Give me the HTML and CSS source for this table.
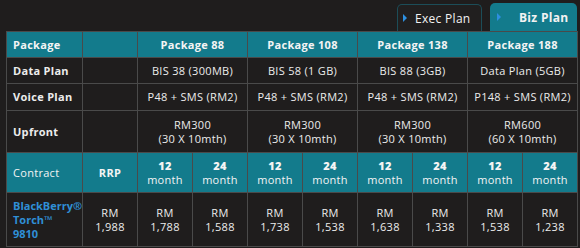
FILE: index.html
```html
<!DOCTYPE html>
<html>
<head>
<meta charset="utf-8">
<link rel="stylesheet" href="styles.css">
</head>
<body>
<div class="page">
  <div class="tabs">
    <div class="tab tab-exec"><span class="arrow"></span>Exec Plan</div>
    <div class="tab tab-biz"><span class="arrow"></span>Biz Plan</div>
  </div>
  <table class="plans">
    <colgroup>
      <col class="c-label"><col class="c-cell"><col class="c-cell"><col class="c-cell"><col class="c-cell"><col class="c-cell"><col class="c-cell"><col class="c-cell"><col class="c-cell"><col class="c-cell">
    </colgroup>
    <tr class="head r-head">
      <th class="label">Package</th>
      <th></th>
      <th colspan="2">Package 88</th>
      <th colspan="2">Package 108</th>
      <th colspan="2">Package 138</th>
      <th colspan="2">Package 188</th>
    </tr>
    <tr class="r-data">
      <th class="label">Data Plan</th>
      <td></td>
      <td colspan="2">BIS 38 (300MB)</td>
      <td colspan="2">BIS 58 (1 GB)</td>
      <td colspan="2">BIS 88 (3GB)</td>
      <td colspan="2">Data Plan (5GB)</td>
    </tr>
    <tr class="r-voice">
      <th class="label">Voice Plan</th>
      <td></td>
      <td colspan="2">P48 + SMS (RM2)</td>
      <td colspan="2">P48 + SMS (RM2)</td>
      <td colspan="2">P48 + SMS (RM2)</td>
      <td colspan="2">P148 + SMS (RM2)</td>
    </tr>
    <tr class="r-upfront">
      <th class="label">Upfront</th>
      <td></td>
      <td colspan="2">RM300<br>(30 X 10mth)</td>
      <td colspan="2">RM300<br>(30 X 10mth)</td>
      <td colspan="2">RM300<br>(30 X 10mth)</td>
      <td colspan="2">RM600<br>(60 X 10mth)</td>
    </tr>
    <tr class="head r-contract">
      <th class="label plain">Contract</th>
      <th>RRP</th>
      <th><b>12</b><br><span class="m">month</span></th>
      <th><b>24</b><br><span class="m">month</span></th>
      <th><b>12</b><br><span class="m">month</span></th>
      <th><b>24</b><br><span class="m">month</span></th>
      <th><b>12</b><br><span class="m">month</span></th>
      <th><b>24</b><br><span class="m">month</span></th>
      <th><b>12</b><br><span class="m">month</span></th>
      <th><b>24</b><br><span class="m">month</span></th>
    </tr>
    <tr class="r-device">
      <th class="label device">BlackBerry®<br>Torch™<br>9810</th>
      <td>RM<br>1,988</td>
      <td>RM<br>1,788</td>
      <td>RM<br>1,588</td>
      <td>RM<br>1,738</td>
      <td>RM<br>1,538</td>
      <td>RM<br>1,638</td>
      <td>RM<br>1,338</td>
      <td>RM<br>1,538</td>
      <td>RM<br>1,238</td>
    </tr>
  </table>
</div>
</body>
</html>
```

FILE: styles.css
```css
html, body {
  margin: 0;
  padding: 0;
  background: #1f1d1d;
}
body {
  width: 580px;
  height: 248px;
  overflow: hidden;
  font-family: "Open Sans", "DejaVu Sans", sans-serif;
  color: #ececec;
}
.page {
  padding: 3px 3px 0 6px;
}
.tabs {
  display: flex;
  justify-content: flex-end;
  align-items: flex-end;
  gap: 8px;
  height: 28px;
}
.tab {
  display: flex;
  align-items: center;
  box-sizing: border-box;
  border-radius: 5px 5px 0 0;
  font-size: 12px;
  color: #f2f2f2;
  letter-spacing: 0.3px;
}
.tab-exec {
  width: 85px;
  height: 27px;
  padding-left: 5px;
  border: 1px solid #1c4d58;
  border-bottom: none;
  background: #211f1f;
}
.tab-biz {
  width: 87px;
  height: 28px;
  padding-left: 7px;
  background: #137b8c;
  font-weight: bold;
}
.arrow {
  width: 0;
  height: 0;
  border-top: 4px solid transparent;
  border-bottom: 4px solid transparent;
  border-left: 4px solid #2d8fe0;
  margin-right: 8px;
}
.tab-biz .arrow {
  margin-right: 18px;
}
.plans {
  border-collapse: collapse;
  table-layout: fixed;
  width: 571px;
  font-size: 11px;
  letter-spacing: 0.3px;
}
.c-label { width: 76px; }
.c-cell { width: 55px; }
.plans th, .plans td {
  border: 1px solid #4a4a4a;
  padding: 0;
  text-align: center;
  line-height: 14px;
  vertical-align: middle;
}
.plans th { font-weight: bold; }
.plans th.label {
  text-align: left;
  padding-left: 6px;
}
.plans th.device { letter-spacing: 0; }
.plans th.plain { font-weight: normal; }
.head th {
  background: #137b8c;
  color: #f4f4f4;
}
.head .m { font-weight: normal; }
.r-head { height: 26px; }
.r-data { height: 26px; }
.r-voice { height: 27px; }
.r-upfront { height: 42px; }
.r-contract { height: 40px; }
.r-device { height: 54px; }
.device { color: #2f8fd6; }
```
